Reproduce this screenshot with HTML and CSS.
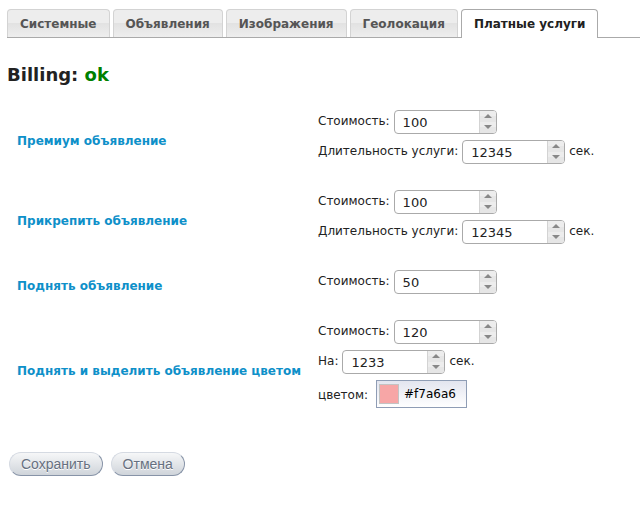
FILE: index.html
```html
<!DOCTYPE html>
<html lang="ru">
<head>
<meta charset="utf-8">
<title>Платные услуги</title>
<link rel="stylesheet" href="styles.css">
</head>
<body>
<nav class="tabs">
  <a class="tab" href="#system">Системные</a>
  <a class="tab" href="#ads">Объявления</a>
  <a class="tab" href="#images">Изображения</a>
  <a class="tab" href="#geo">Геолокация</a>
  <a class="tab tab-active" href="#paid" aria-current="page">Платные услуги</a>
</nav>
<main class="panel">
  <h1 class="title">Billing: <span class="status">ok</span></h1>
  <form class="settings">
    <section class="service">
      <h2 class="name">Премиум объявление</h2>
      <div class="fields">
        <div class="line">
          <label for="premium-cost">Стоимость:</label>
          <span class="spinner"><input id="premium-cost" type="text" value="100"><span class="arrows"><button type="button" class="arrow up" aria-label="+"></button><button type="button" class="arrow down" aria-label="−"></button></span></span>
        </div>
        <div class="line">
          <label for="premium-time">Длительность услуги:</label>
          <span class="spinner"><input id="premium-time" type="text" value="12345"><span class="arrows"><button type="button" class="arrow up" aria-label="+"></button><button type="button" class="arrow down" aria-label="−"></button></span></span>
          <span>сек.</span>
        </div>
      </div>
    </section>
    <section class="service">
      <h2 class="name">Прикрепить объявление</h2>
      <div class="fields">
        <div class="line">
          <label for="pin-cost">Стоимость:</label>
          <span class="spinner"><input id="pin-cost" type="text" value="100"><span class="arrows"><button type="button" class="arrow up" aria-label="+"></button><button type="button" class="arrow down" aria-label="−"></button></span></span>
        </div>
        <div class="line">
          <label for="pin-time">Длительность услуги:</label>
          <span class="spinner"><input id="pin-time" type="text" value="12345"><span class="arrows"><button type="button" class="arrow up" aria-label="+"></button><button type="button" class="arrow down" aria-label="−"></button></span></span>
          <span>сек.</span>
        </div>
      </div>
    </section>
    <section class="service">
      <h2 class="name">Поднять объявление</h2>
      <div class="fields">
        <div class="line">
          <label for="up-cost">Стоимость:</label>
          <span class="spinner"><input id="up-cost" type="text" value="50"><span class="arrows"><button type="button" class="arrow up" aria-label="+"></button><button type="button" class="arrow down" aria-label="−"></button></span></span>
        </div>
      </div>
    </section>
    <section class="service">
      <h2 class="name">Поднять и выделить объявление цветом</h2>
      <div class="fields">
        <div class="line">
          <label for="color-cost">Стоимость:</label>
          <span class="spinner"><input id="color-cost" type="text" value="120"><span class="arrows"><button type="button" class="arrow up" aria-label="+"></button><button type="button" class="arrow down" aria-label="−"></button></span></span>
        </div>
        <div class="line">
          <label for="color-time">На:</label>
          <span class="spinner"><input id="color-time" type="text" value="1233"><span class="arrows"><button type="button" class="arrow up" aria-label="+"></button><button type="button" class="arrow down" aria-label="−"></button></span></span>
          <span>сек.</span>
        </div>
        <div class="line line-color">
          <label for="color">цветом:</label>
          <span class="picker"><span class="swatch"></span><input id="color" type="text" value="#f7a6a6"></span>
        </div>
      </div>
    </section>
    <div class="actions">
      <button type="submit" class="pill">Сохранить</button>
      <button type="reset" class="pill">Отмена</button>
    </div>
  </form>
</main>
</body>
</html>
```
FILE: styles.css
```css
* {
  box-sizing: border-box;
}

body {
  margin: 0;
  background: #fff;
  color: #222;
  font: 12px/22px Verdana, "DejaVu Sans", sans-serif;
}

.tabs {
  display: flex;
  gap: 3px;
  margin-left: 7px;
  padding-top: 9px;
  border-bottom: 1px solid #aaa;
}

.tab {
  height: 28px;
  padding: 3px 12px;
  border: 1px solid #d3d3d3;
  border-bottom: 0;
  border-radius: 4px 4px 0 0;
  background: linear-gradient(#ededed 50%, #e2e2e2 50%, #eee);
  color: #555;
  font-weight: bold;
  text-decoration: none;
  white-space: nowrap;
}

.tab-active {
  height: 29px;
  margin-bottom: -1px;
  border-color: #aaa;
  background: #fff;
  color: #212121;
}

.panel {
  padding: 25px 7px;
}

.title {
  margin: 0 0 13px;
  font-size: 18px;
  line-height: 24px;
}

.status {
  color: green;
}

.service {
  display: grid;
  grid-template-columns: 301px 1fr;
  align-items: center;
  padding: 10px 0 10px 10px;
}

.name {
  margin: 0;
  padding-top: 2px;
  color: #0e90c9;
  font-size: 12px;
  line-height: 20px;
}

.line {
  display: flex;
  gap: 4px;
  height: 30px;
  padding-bottom: 6px;
  white-space: nowrap;
}

.line-color {
  gap: 8px;
  height: 40px;
  padding: 0 0 12px;
}

.line-color label {
  padding-top: 4px;
}

.spinner {
  display: flex;
  width: 103px;
  height: 24px;
  overflow: hidden;
  border: 1px solid #aaa;
  border-radius: 4px;
}

input {
  min-width: 0;
  padding: 0;
  border: 0;
  outline: 0;
  background: transparent;
  color: #222;
  font: 13px/20px Verdana, "DejaVu Sans", sans-serif;
}

.spinner input {
  flex: 1;
  padding: 2px 0 0 8px;
}

.arrows {
  display: flex;
  flex-direction: column;
  width: 17px;
  padding-bottom: 1px;
  border-left: 1px solid #d3d3d3;
  background: #e6e6e6;
}

.arrow {
  display: flex;
  flex: 1;
  align-items: center;
  justify-content: center;
  padding: 0;
  border: 0;
  background: linear-gradient(#ededed 50%, #e6e6e6 50%);
}

.arrow::before {
  content: "";
  border: 4px solid transparent;
}

.up::before {
  border-top: 0;
  border-bottom-color: #888;
}

.down::before {
  border-bottom: 0;
  border-top-color: #888;
}

.picker {
  display: flex;
  gap: 5px;
  align-items: center;
  width: 91px;
  height: 28px;
  padding: 0 2px;
  border: 1px solid #8f9db5;
  background: linear-gradient(#e3e5ef, #fff);
}

.swatch {
  flex: none;
  width: 20px;
  height: 20px;
  border: 1px solid #c3c3c3;
  background: #f7a6a6;
}

.picker input {
  width: 60px;
  color: #000;
  font-size: 12px;
}

.actions {
  display: flex;
  gap: 8px;
  padding: 22px 2px;
}

.pill {
  height: 24px;
  padding: 0 11px;
  border: 1px solid;
  border-color: #d5dae2 #8793a7 #8793a7 #d5dae2;
  border-radius: 12px;
  background: linear-gradient(#f6f7f8, #cfd4da);
  color: #667080;
  font: 14px/20px "Liberation Sans", Arial, sans-serif;
  text-shadow: 0 1px 0 #fff;
}
```
